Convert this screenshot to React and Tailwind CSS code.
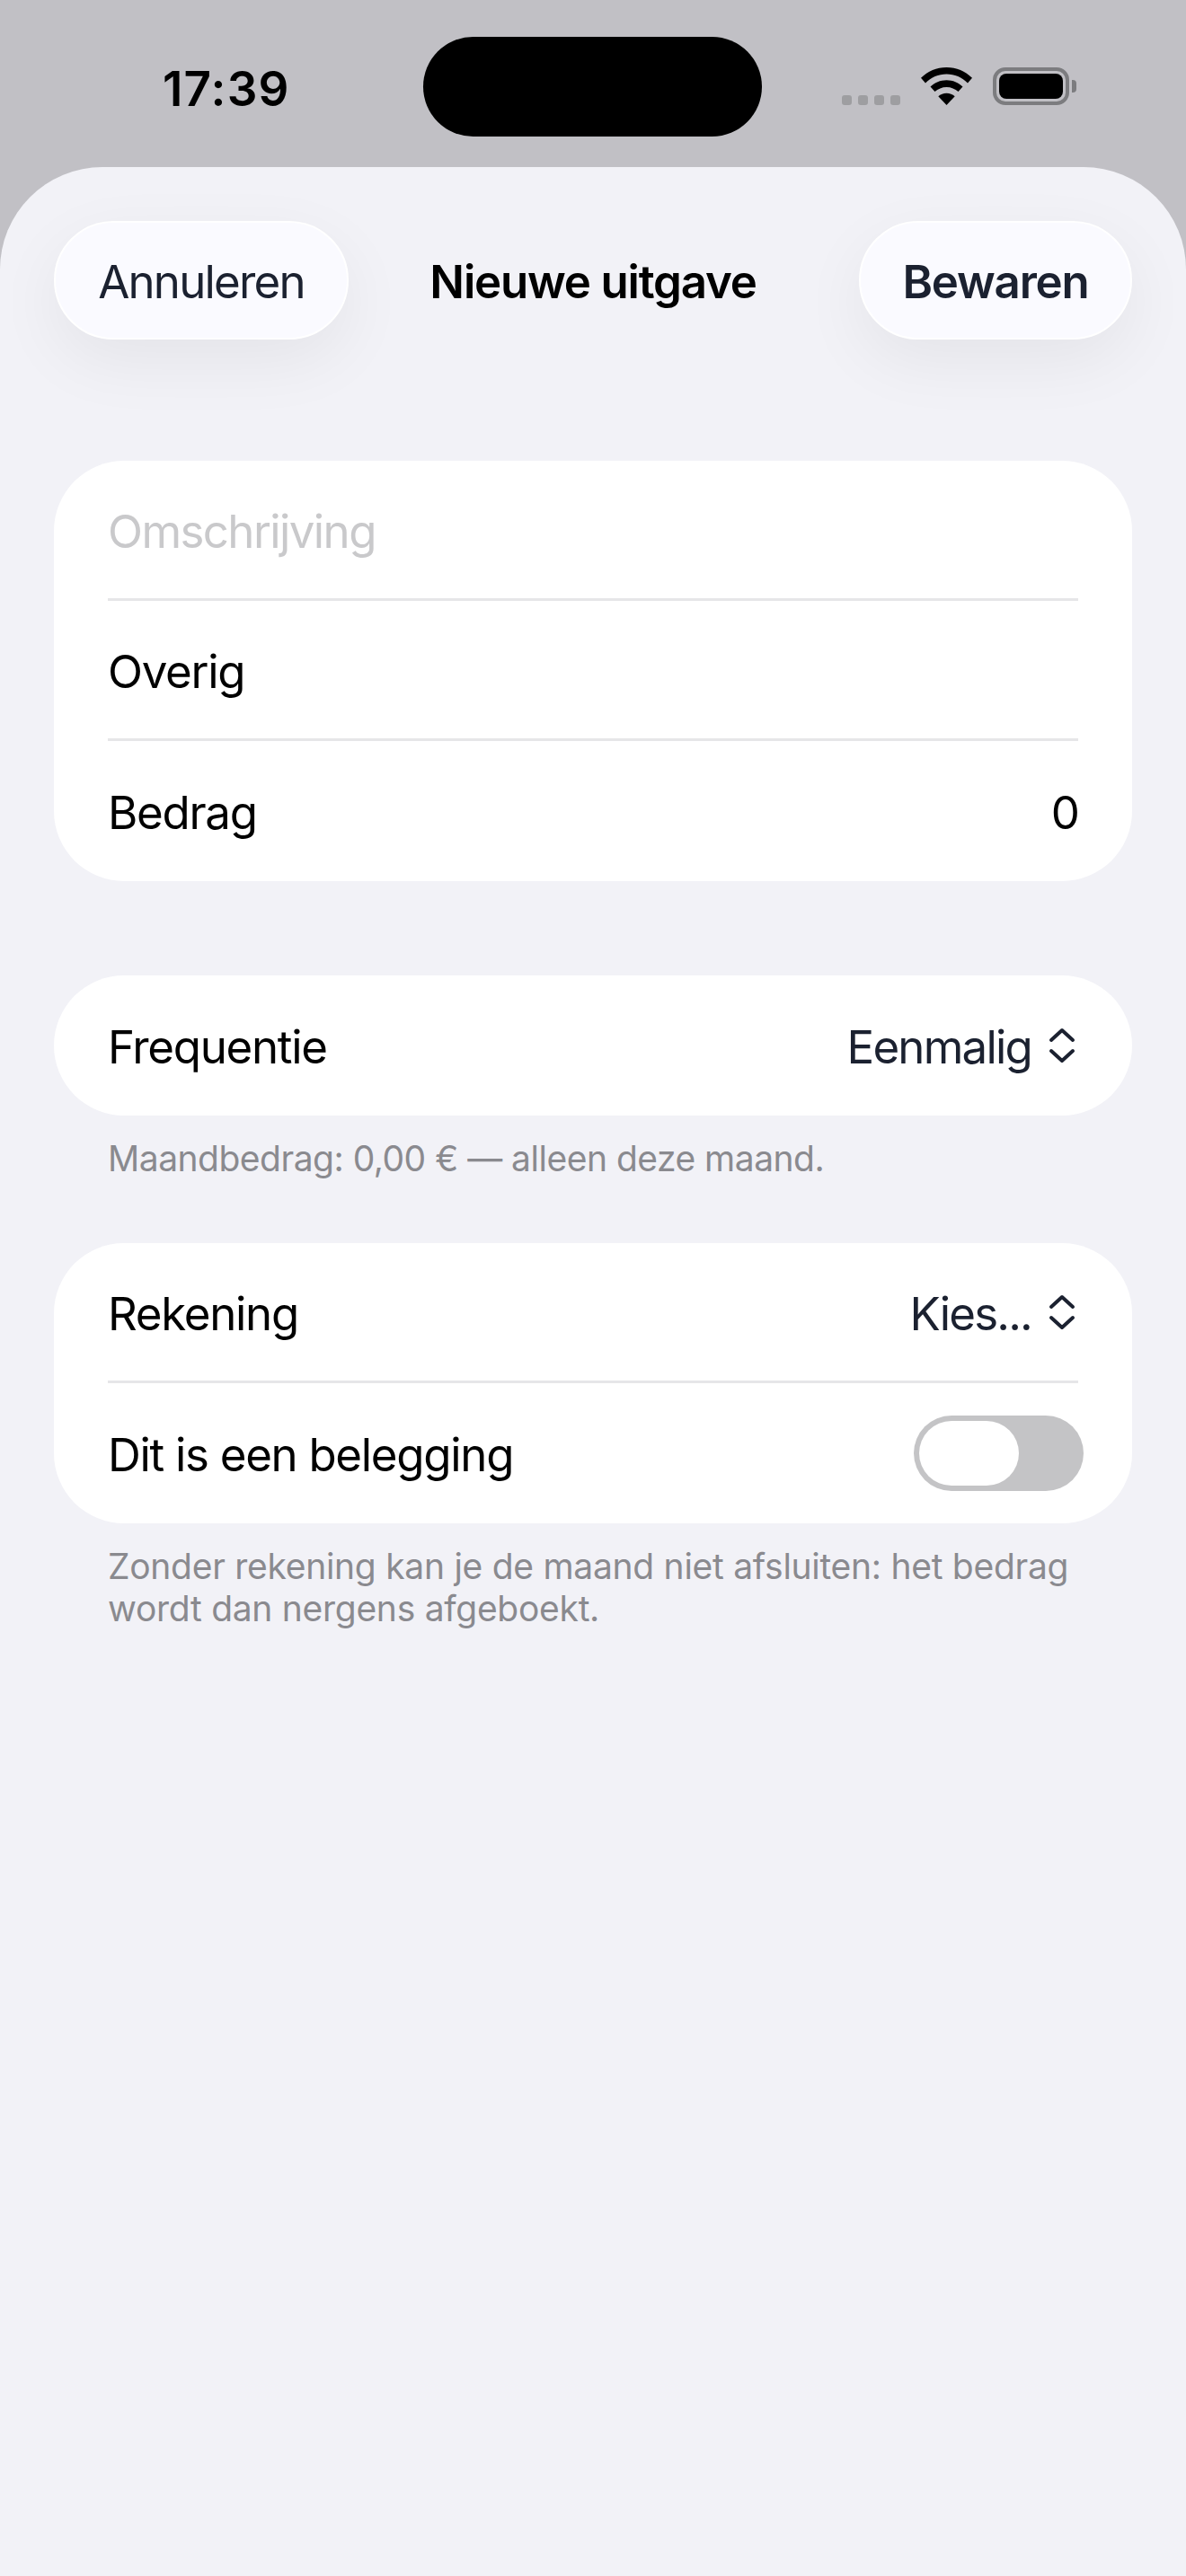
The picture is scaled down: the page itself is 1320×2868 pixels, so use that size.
import React from "react";

const inter = { fontFamily: "Inter, sans-serif" };

function Row({ label, children, border = false, muted = false }) {
  return (
    <div className={`flex h-[156px] items-center justify-between ${border ? "border-b-[3px] border-[#e6e6e8]" : ""}`}>
      <span className={`${muted ? "text-[#c9c9cb] tracking-[-1.6px]" : "text-black tracking-[-1.3px]"} pt-[4px] text-[51px] leading-[60px]`}>{label}</span>
      {children}
    </div>
  );
}

function Chevrons() {
  return (
    <svg width="30" height="42" viewBox="0 0 30 42" fill="none" stroke="#1b2130" strokeWidth="4" strokeLinecap="round" strokeLinejoin="round" className="ml-[19px] mr-[3px]">
      <path d="M3 15 15 4l12 11" />
      <path d="M3 27l12 11 12-11" />
    </svg>
  );
}

function Picker({ value }) {
  return (
    <div className="flex items-center">
      <span className="pt-[4px] text-[51px] leading-[60px] tracking-[-1.8px] text-[#1b2130]">{value}</span>
      <Chevrons />
    </div>
  );
}

function Wifi() {
  return (
    <svg width="57" height="42" viewBox="0 0 57 42" fill="#000">
      <path d="M28.5 0C17.5 0 7.6 4.4 0 11.8l5 5.6C11.300 11.200 19.500 7.500 28.500 7.500S45.700 11.200 52 17.400l5-5.600C49.400 4.400 39.500 0 28.500 0Z" />
      <path d="M28.500 14.300c-7 0-13.300 2.800-18 7.200l5 5.500c3.400-3.100 8-5.100 13-5.100s9.600 2 13 5.100l5-5.500c-4.700-4.400-11-7.200-18-7.200Z" />
      <path d="M28.500 28.700c-3.500 0-6.800 1.300-9.200 3.500L28.500 42l9.200-9.800c-2.400-2.200-5.700-3.500-9.200-3.500Z" />
    </svg>
  );
}

function StatusBar() {
  return (
    <div className="flex h-[186px] shrink-0 pt-[41px]">
      <span className="ml-[181px] mt-[31px] w-[290px] text-[53px] font-semibold leading-[54px] tracking-[1.2px] text-black">17:39</span>
      <div className="h-[111px] w-[377px] rounded-[56px] bg-black" />
      <div className="ml-[89px] mt-[34px] flex h-[42px] items-end">
        <div className="flex gap-[7px]">
          {[0, 1, 2, 3].map((i) => (
            <div key={i} className="h-[11px] w-[11px] rounded-[3px] bg-[#9e9ea1]" />
          ))}
        </div>
        <div className="ml-[23px]">
          <Wifi />
        </div>
        <div className="ml-[23px] flex items-center self-stretch">
          <div className="h-[42px] w-[85px] rounded-[14px] border-[4px] border-[#7c7c7f] p-[3px]">
            <div className="h-full w-full rounded-[8px] bg-black" />
          </div>
          <div className="ml-[3px] h-[14px] w-[5px] rounded-r-[4px] bg-[#7c7c7f]" />
        </div>
      </div>
    </div>
  );
}

export default function App() {
  return (
    <div style={inter} className="flex h-[2868px] w-[1320px] flex-col overflow-hidden bg-[#c1c0c5]">
      <StatusBar />

      {/* Sheet */}
      <div className="flex-1 overflow-hidden rounded-t-[114px] bg-[#f2f2f7] px-[60px] pt-[60px]">
        <div className="grid grid-cols-[1fr_auto_1fr] items-center">
          <button className="h-[132px] w-[328px] rounded-[66px] border-[2px] border-white bg-[#fafaff] pt-[4px] text-[51px] tracking-[-1.8px] text-[#1b2130] shadow-[0_24px_75px_rgba(0,0,0,0.06)]">
            Annuleren
          </button>
          <span className="pt-[4px] text-[51px] font-semibold tracking-[-1.2px] text-black">Nieuwe uitgave</span>
          <button className="h-[132px] w-[304px] justify-self-end rounded-[66px] border-[2px] border-white bg-[#fafaff] pt-[4px] text-[51px] font-semibold tracking-[-1.2px] text-[#1b2130] shadow-[0_24px_75px_rgba(0,0,0,0.06)]">
            Bewaren
          </button>
        </div>

        <div className="mt-[135px] rounded-[78px] bg-white px-[60px]">
          <Row label="Omschrijving" border muted />
          <Row label="Overig" border />
          <Row label="Bedrag">
            <span className="-mr-[2px] pt-[4px] text-[51px] leading-[60px] text-black">0</span>
          </Row>
        </div>

        <div className="mt-[105px] rounded-[78px] bg-white px-[60px]">
          <Row label="Frequentie">
            <Picker value="Eenmalig" />
          </Row>
        </div>
        <p className="mt-[24px] px-[60px] text-[39px] leading-[48px] tracking-[-0.5px] text-[#8a8a8f]">
          Maandbedrag: 0,00 € — alleen deze maand.
        </p>

        <div className="mt-[70px] rounded-[78px] bg-white px-[60px]">
          <Row label="Rekening" border>
            <Picker value="Kies..." />
          </Row>
          <Row label="Dit is een belegging">
            <div className="-mr-[6px] flex h-[84px] w-[189px] items-center rounded-[42px] bg-[#c4c4c6] pl-[6px]">
              <div className="h-[72px] w-[111px] rounded-[36px] bg-white" />
            </div>
          </Row>
        </div>
        <p className="mt-[24px] px-[60px] text-[39px] leading-[47px] tracking-[-0.28px] text-[#8a8a8f]">
          Zonder rekening kan je de maand niet afsluiten: het bedrag wordt dan nergens afgeboekt.
        </p>
      </div>
    </div>
  );
}
